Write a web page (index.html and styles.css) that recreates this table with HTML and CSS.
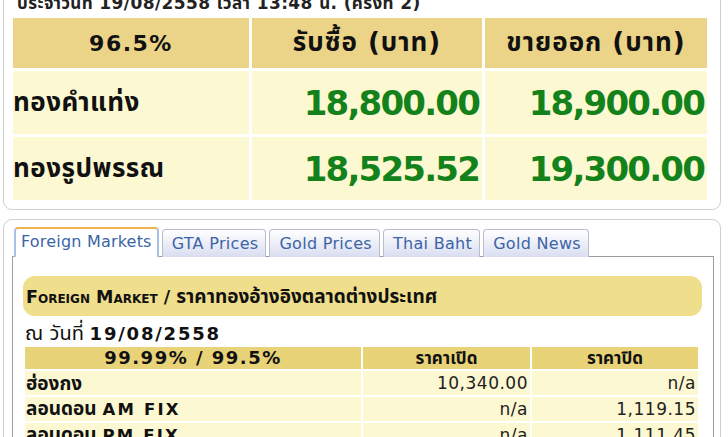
FILE: index.html
```html
<!DOCTYPE html>
<html lang="th">
<head>
<meta charset="utf-8">
<link rel="stylesheet" href="styles.css">
</head>
<body>
<div class="page">
  <section class="box box-price">
    <div class="stamp">ประจำวันที่ 19/08/2558 เวลา 13:48 น. (ครั้งที่ 2)</div>
    <table class="price">
      <tr class="head">
        <th class="lat">96.5%</th>
        <th>รับซื้อ (บาท)</th>
        <th>ขายออก (บาท)</th>
      </tr>
      <tr>
        <td class="label">ทองคำแท่ง</td>
        <td class="num">18,800.00</td>
        <td class="num">18,900.00</td>
      </tr>
      <tr>
        <td class="label">ทองรูปพรรณ</td>
        <td class="num">18,525.52</td>
        <td class="num">19,300.00</td>
      </tr>
    </table>
  </section>

  <section class="box box-tabs">
    <ul class="tabs">
      <li class="tab active">Foreign Markets</li>
      <li class="tab">GTA Prices</li>
      <li class="tab">Gold Prices</li>
      <li class="tab">Thai Baht</li>
      <li class="tab">Gold News</li>
    </ul>
    <div class="panel">
      <div class="bar"><span class="sc">Foreign Market</span> / <span class="th">ราคาทองอ้างอิงตลาดต่างประเทศ</span></div>
      <div class="date"><span class="th">ณ วันที่</span> <b>19/08/2558</b></div>
      <table class="market">
        <tr class="head">
          <th class="lat">99.99% / 99.5%</th>
          <th>ราคาเปิด</th>
          <th>ราคาปิด</th>
        </tr>
        <tr>
          <td class="label"><span class="th">ฮ่องกง</span></td>
          <td class="num">10,340.00</td>
          <td class="num">n/a</td>
        </tr>
        <tr>
          <td class="label"><span class="th">ลอนดอน</span> <span class="lat">AM FIX</span></td>
          <td class="num">n/a</td>
          <td class="num">1,119.15</td>
        </tr>
        <tr>
          <td class="label"><span class="th">ลอนดอน</span> <span class="lat">PM FIX</span></td>
          <td class="num">n/a</td>
          <td class="num">1,111.45</td>
        </tr>
      </table>
    </div>
  </section>
</div>
</body>
</html>
```

FILE: styles.css
```css
html, body {
  margin: 0;
  padding: 0;
  background: #ffffff;
}
body {
  font-family: "DejaVu Sans", "Noto Sans Thai", "Loma", "Garuda", "Noto Sans", sans-serif;
  color: #111;
  overflow: hidden;
}
.page {
  width: 718px;
  margin-left: 3px;
  margin-top: -14px;
}
.box {
  border: 1px solid #cfcfcf;
  border-radius: 9px;
  background: #fff;
}
.box-price {
  padding: 0 8px 9px 9px;
}
.stamp {
  font-size: 17px;
  font-weight: bold;
  line-height: 22px;
  letter-spacing: 0.4px;
  padding: 5px 0 0 4px;
  height: 26px;
  color: #222;
}
table {
  border-collapse: separate;
}
.price {
  width: 700px;
  border-spacing: 3px;
  margin: -3px;
}
.price th {
  background: #ebd488;
  height: 50px;
  font-size: 26px;
  letter-spacing: 1px;
  font-weight: bold;
  color: #111;
  padding: 0;
}
.price th.lat {
  font-size: 22px;
  letter-spacing: 1.5px;
}
.price td {
  background: #fcf8d2;
  height: 63px;
  padding: 0;
}
.price th:nth-child(1) { width: 236px; }
.price th:nth-child(2) { width: 230px; }
.price .label {
  font-size: 26px;
  letter-spacing: 0.5px;
  font-weight: bold;
  color: #111;
}
.price .num {
  text-align: right;
  font-size: 34px;
  letter-spacing: -1.8px;
  font-weight: bold;
  color: #14821a;
  padding-right: 3px;
}
.box-tabs {
  margin-top: 9px;
  padding: 7px 6px 0 8px;
  height: 241px;
}
.tabs {
  list-style: none;
  margin: 0;
  padding: 0 0 0 2px;
  display: flex;
  gap: 3px;
  height: 29px;
}
.tab {
  font-size: 16px;
  letter-spacing: 0.3px;
  color: #3b64a6;
  border: 1px solid #b9bccb;
  border-bottom: none;
  border-radius: 4px 4px 0 0;
  background: linear-gradient(#ffffff, #d9ddf0);
  padding: 4px 7px 0 9px;
  height: 23px;
  margin-top: 2px;
  line-height: 20px;
}
.tab.active {
  background: #fff;
  letter-spacing: 0.2px;
  border: 2px solid #a9c0e4;
  border-top: 2px solid #f0b24c;
  border-bottom: none;
  margin-top: 0;
  height: 25px;
  padding: 3px 5px 0 5px;
  position: relative;
  z-index: 1;
  margin-bottom: -1px;
}
.panel {
  border: 1px solid #9d9d9d;
  border-bottom: none;
  padding: 19px 11px 0 10px;
  height: 200px;
}
.bar {
  background: #efde8c;
  border-radius: 12px;
  height: 40px;
  line-height: 40px;
  font-size: 17.5px;
  font-weight: bold;
  padding-left: 3px;
  color: #111;
}
.bar .th {
  font-size: 19px;
}
.sc {
  font-variant: small-caps;
}
.date {
  font-size: 18px;
  padding: 6px 0 0 2px;
  line-height: 22px;
  height: 23px;
}
.date .th {
  font-size: 20px;
}
.date b {
  letter-spacing: 1.8px;
}
.market {
  width: 677px;
  border-spacing: 2px;
}
.market th {
  background: #e8d378;
  height: 22px;
  line-height: 20px;
  font-size: 17px;
  font-weight: bold;
  padding: 0;
}
.market th.lat {
  font-size: 18px;
  letter-spacing: 1.5px;
}
.market th:nth-child(1) { width: 336px; }
.market th:nth-child(2) { width: 167px; }
.market td {
  background: #fcf8d2;
  height: 24px;
  line-height: 22px;
  padding: 0 2px 0 1px;
  font-size: 17px;
}
.market .label {
  font-weight: bold;
}
.market .label .th {
  font-size: 19px;
}
.market .label .lat {
  font-size: 16.5px;
  letter-spacing: 2.2px;
}
.market .num {
  text-align: right;
  letter-spacing: 0.5px;
  color: #222;
}
```
